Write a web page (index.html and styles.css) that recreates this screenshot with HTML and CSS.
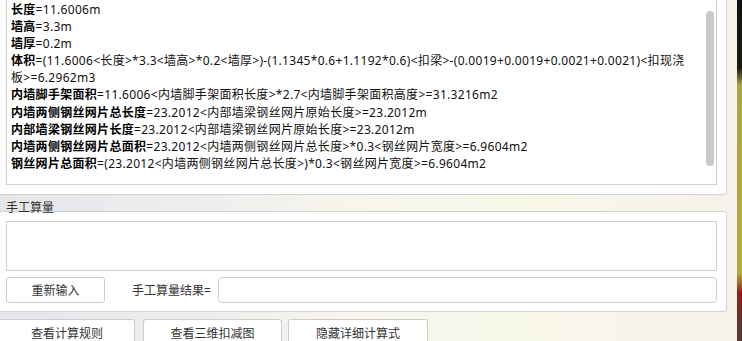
FILE: index.html
```html
<!DOCTYPE html>
<html lang="zh-CN">
<head>
    <meta charset="UTF-8">
    <title>计算式</title>
    <link rel="stylesheet" href="styles.css">
</head>
<body>
    <div class="window">
        <div class="main">
            <div class="result-panel">
                <div class="result-box">
                    <div class="result-text">
                        <div><b>长度</b>=11.6006m</div>
                        <div><b>墙高</b>=3.3m</div>
                        <div><b>墙厚</b>=0.2m</div>
                        <div><b>体积</b>=(11.6006&lt;长度&gt;*3.3&lt;墙高&gt;*0.2&lt;墙厚&gt;)-(1.1345*0.6+1.1192*0.6)&lt;扣梁&gt;-(0.0019+0.0019+0.0021+0.0021)&lt;扣现浇<br>板&gt;=6.2962m3</div>
                        <div><b>内墙脚手架面积</b>=11.6006&lt;内墙脚手架面积长度&gt;*2.7&lt;内墙脚手架面积高度&gt;=31.3216m2</div>
                        <div><b>内墙两侧钢丝网片总长度</b>=23.2012&lt;内部墙梁钢丝网片原始长度&gt;=23.2012m</div>
                        <div><b>内部墙梁钢丝网片长度</b>=23.2012&lt;内部墙梁钢丝网片原始长度&gt;=23.2012m</div>
                        <div><b>内墙两侧钢丝网片总面积</b>=23.2012&lt;内墙两侧钢丝网片总长度&gt;*0.3&lt;钢丝网片宽度&gt;=6.9604m2</div>
                        <div><b>钢丝网片总面积</b>=(23.2012&lt;内墙两侧钢丝网片总长度&gt;)*0.3&lt;钢丝网片宽度&gt;=6.9604m2</div>
                    </div>
                    <div class="scroll-track"><div class="scroll-thumb"></div></div>
                </div>
            </div>

            <div class="group-title">手工算量</div>
            <div class="group">
                <textarea class="manual-input"></textarea>
                <div class="manual-row">
                    <button class="btn reset-btn">重新输入</button>
                    <span class="result-label">手工算量结果=</span>
                    <input class="result-input" type="text">
                </div>
            </div>

            <div class="actions">
                <button class="btn action-btn rules">查看计算规则</button>
                <button class="btn action-btn view3d">查看三维扣减图</button>
                <button class="btn action-btn hide">隐藏详细计算式</button>
            </div>
        </div>
        <div class="wallpaper"></div>
    </div>
</body>
</html>
```

FILE: styles.css
```css
body {
    margin: 0;
    width: 742px;
    height: 341px;
    overflow: hidden;
    font-family: "Noto Sans", "Noto Sans CJK SC", sans-serif;
    font-size: 12px;
    color: #222;
    background: linear-gradient(90deg, #e6e6ea 0%, #ecebee 20%, #f6f4ec 45%, #f8f8ea 70%, #f6f1ea 100%);
}
.window {
    display: flex;
    height: 341px;
}
.main {
    width: 737px;
    display: flex;
    flex-direction: column;
}
.main > * {
    flex-shrink: 0;
}
.wallpaper {
    width: 5px;
    background: linear-gradient(180deg, #111 0%, #1a1a10 20%, #a8a838 25%, #b0b030 80%, #a01818 86%, #5a3a36 96%);
}
.result-panel {
    width: 727px;
    height: 200px;
    margin-top: -5px;
    padding: 0 0 0 6px;
    background: #fff;
    border: 1px solid #d2d2d2;
    border-left: none;
    border-top: none;
    border-radius: 0 0 4px 0;
    box-sizing: border-box;
}
.result-box {
    width: 711px;
    height: 190px;
    box-sizing: border-box;
    border: 1px solid #cfcfcf;
    display: flex;
    background: #fff;
}
.result-text {
    flex: 1;
    padding: 5px 0 0 4px;
    line-height: 17.1px;
    letter-spacing: 0.3px;
    color: #111;
    white-space: nowrap;
    overflow: hidden;
}
.result-text b {
    color: #000;
}
.scroll-track {
    width: 8px;
    padding: 15px 2px 0 0;
}
.scroll-thumb {
    width: 8px;
    height: 155px;
    border-radius: 4px;
    background: #c9c9c9;
}
.group-title {
    height: 16px;
    line-height: 16px;
    padding: 5px 0 0 6px;
    margin-bottom: -5px;
    color: #333;
    position: relative;
    z-index: 1;
}
.group {
    width: 727px;
    box-sizing: border-box;
    height: 101px;
    background: #fff;
    border: 1px solid #d2d2d2;
    border-left: none;
    border-radius: 0 4px 4px 0;
    padding: 9px 0 0 6px;
}
.manual-input {
    display: block;
    width: 711px;
    height: 50px;
    box-sizing: border-box;
    border: 1px solid #cfcfcf;
    resize: none;
    margin: 0;
    outline: none;
}
.manual-row {
    display: flex;
    align-items: center;
    margin-top: 6px;
    height: 26px;
}
.btn {
    font-family: "Noto Sans", "Noto Sans CJK SC", sans-serif;
    font-size: 12px;
    color: #333;
    background: #fff;
    border: 1px solid #cdcdcd;
    padding: 0;
    cursor: pointer;
}
.reset-btn {
    width: 99px;
    height: 26px;
    border-radius: 3px;
}
.result-label {
    margin-left: 27px;
    width: 86px;
    color: #333;
}
.result-input {
    width: 499px;
    height: 26px;
    box-sizing: border-box;
    border: 1px solid #cfcfcf;
    border-radius: 4px;
    margin: 0;
    outline: none;
}
.actions {
    display: flex;
    margin-top: 7px;
}
.action-btn {
    height: 27px;
    border-radius: 3px 3px 0 0;
    border-bottom: none;
}
.rules {
    width: 135px;
    border-left: none;
    border-radius: 0 3px 0 0;
}
.view3d {
    width: 139px;
    margin-left: 8px;
}
.hide {
    width: 140px;
    margin-left: 6px;
}
```
